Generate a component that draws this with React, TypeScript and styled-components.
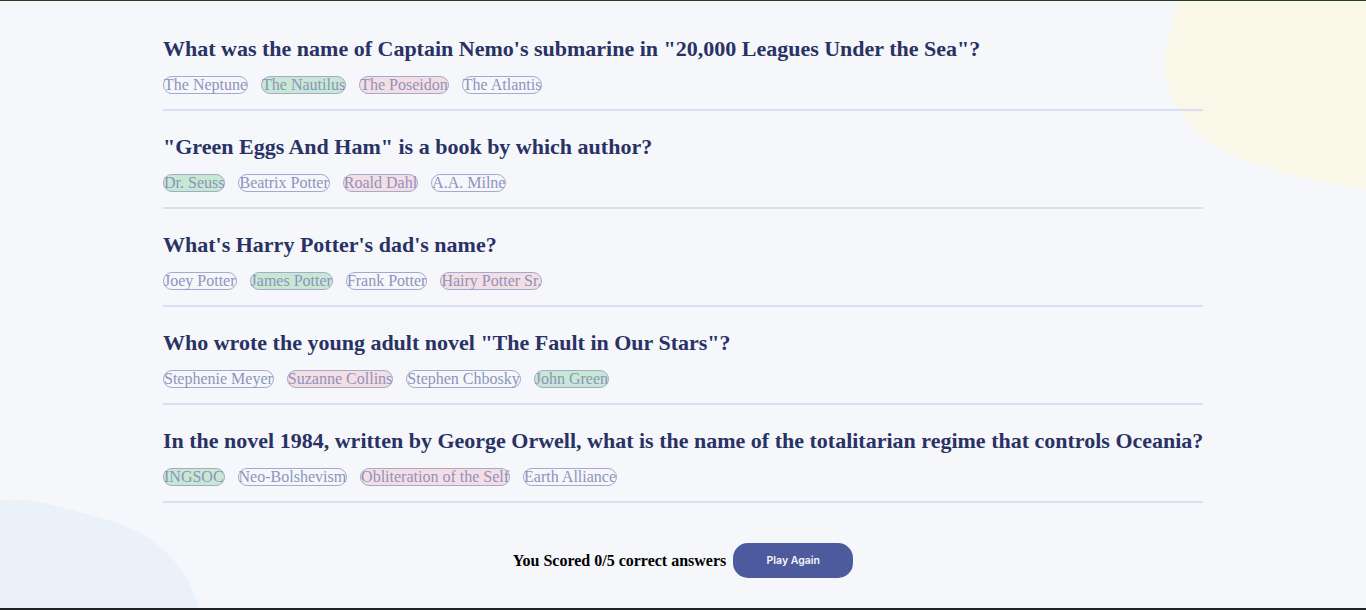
import React from "react";
import styled, { createGlobalStyle } from "styled-components";

const Global = createGlobalStyle`
  html, body { margin: 0; padding: 0; }
  body { background: #F5F7FB; font-family: "Liberation Serif", "Times New Roman", serif; }
  * { box-sizing: border-box; }
`;

const Page = styled.div`
  position: relative;
  height: 610px;
  overflow: hidden;
  background: #F5F7FB;
  border-top: 1px solid #263f25;
  border-bottom: 2px solid #202124;
  display: flex;
  flex-direction: column;
  align-items: center;
`;

const Blob = styled.svg<{ $corner: "tr" | "bl" }>`
  position: absolute;
  z-index: 0;
  ${(p) => (p.$corner === "tr" ? "top: 0; right: 0;" : "bottom: 0; left: 0;")}
`;

const Quiz = styled.main`
  position: relative;
  z-index: 1;
  width: 1040px;
  padding-top: 35px;
  display: flex;
  flex-direction: column;
`;

const Question = styled.section`
  border-bottom: 2px solid #DBDEF0;
  padding-bottom: 15px;
  margin-bottom: 23px;
`;

const Title = styled.h2`
  margin: 0 0 14px;
  font-family: "Liberation Serif", "Times New Roman", serif;
  font-weight: 700;
  font-size: 22px;
  line-height: 26px;
  color: #293264;
  white-space: nowrap;
`;

const Options = styled.div`
  display: flex;
  gap: 13px;
`;

const Pill = styled.span<{ $state?: "right" | "wrong" }>`
  display: inline-block;
  height: 18px;
  font-family: "Liberation Serif", "Times New Roman", serif;
  font-size: 16px;
  line-height: 16px;
  color: #8d94bd;
  border: 1px solid #a4aace;
  border-radius: 9px;
  padding: 0;
  background: ${(p) =>
    p.$state === "right" ? "#C7E8D2" : p.$state === "wrong" ? "#F5DEE3" : "transparent"};
`;

const ScoreRow = styled.div`
  display: flex;
  align-items: center;
  justify-content: center;
  gap: 7px;
  margin-top: 17px;
`;

const ScoreText = styled.p`
  margin: 0;
  font-family: "Liberation Serif", "Times New Roman", serif;
  font-weight: 700;
  font-size: 16px;
  color: #000;
`;

const Button = styled.button`
  width: 120px;
  height: 35px;
  border: none;
  border-radius: 15px;
  background: #4D5B9E;
  color: #F5F7FB;
  font-family: Inter, "Noto Sans", sans-serif;
  font-weight: 600;
  font-size: 10.5px;
  cursor: pointer;
`;

type Q = { q: string; opts: { t: string; s?: "right" | "wrong" }[] };

const questions: Q[] = [
  {
    q: `What was the name of Captain Nemo's submarine in "20,000 Leagues Under the Sea"?`,
    opts: [
      { t: "The Neptune" },
      { t: "The Nautilus", s: "right" },
      { t: "The Poseidon", s: "wrong" },
      { t: "The Atlantis" },
    ],
  },
  {
    q: `"Green Eggs And Ham" is a book by which author?`,
    opts: [
      { t: "Dr. Seuss", s: "right" },
      { t: "Beatrix Potter" },
      { t: "Roald Dahl", s: "wrong" },
      { t: "A.A. Milne" },
    ],
  },
  {
    q: `What's Harry Potter's dad's name?`,
    opts: [
      { t: "Joey Potter" },
      { t: "James Potter", s: "right" },
      { t: "Frank Potter" },
      { t: "Hairy Potter Sr.", s: "wrong" },
    ],
  },
  {
    q: `Who wrote the young adult novel "The Fault in Our Stars"?`,
    opts: [
      { t: "Stephenie Meyer" },
      { t: "Suzanne Collins", s: "wrong" },
      { t: "Stephen Chbosky" },
      { t: "John Green", s: "right" },
    ],
  },
  {
    q: `In the novel 1984, written by George Orwell, what is the name of the totalitarian regime that controls Oceania?`,
    opts: [
      { t: "INGSOC", s: "right" },
      { t: "Neo-Bolshevism" },
      { t: "Obliteration of the Self", s: "wrong" },
      { t: "Earth Alliance" },
    ],
  },
];

export default function App() {
  return (
    <>
      <Global />
      <Page>
        <Blob $corner="tr" width="202" height="190" viewBox="0 0 202 190">
          <path
            d="M14 0 C8 25 0 50 1 68 C3 100 25 130 60 150 C95 168 140 178 202 188 L202 0 Z"
            fill="#F9F8E8"
          />
        </Blob>
        <Blob $corner="bl" width="200" height="110" viewBox="0 0 200 110">
          <path
            d="M0 2 C20 0 40 3 60 9 C90 17 120 24 140 35 C170 52 190 78 199 110 L0 110 Z"
            fill="#EAF1F9"
          />
        </Blob>
        <Quiz>
          {questions.map((q) => (
            <Question key={q.q}>
              <Title>{q.q}</Title>
              <Options>
                {q.opts.map((o) => (
                  <Pill key={o.t} $state={o.s}>
                    {o.t}
                  </Pill>
                ))}
              </Options>
            </Question>
          ))}
          <ScoreRow>
            <ScoreText>You Scored 0/5 correct answers</ScoreText>
            <Button>Play Again</Button>
          </ScoreRow>
        </Quiz>
      </Page>
    </>
  );
}
